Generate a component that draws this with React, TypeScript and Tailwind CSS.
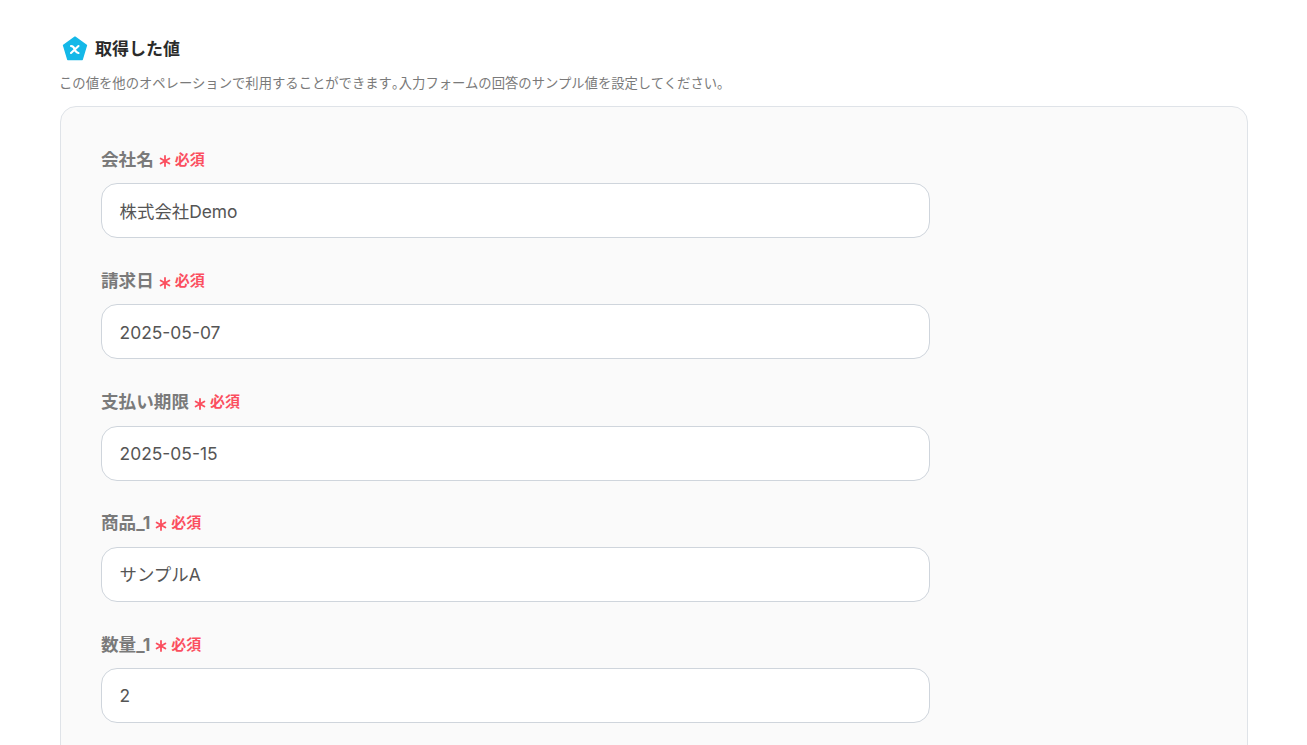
const FIELDS = [
  { label: '会社名', value: '株式会社Demo' },
  { label: '請求日', value: '2025-05-07' },
  { label: '支払い期限', value: '2025-05-15' },
  { label: '商品_1', value: 'サンプルA' },
  { label: '数量_1', value: '2' },
]

function Field({ label, value }: { label: string; value: string }) {
  return (
    <div>
      <div className="flex h-[20px] items-center">
        <span className="text-[17.6px] leading-[20px] font-bold text-[#7a7a7a]">{label}</span>
        <span className="ml-[5px] text-[#fb4f5f]">
          <svg width="12" height="12" viewBox="0 0 12 12" className="mt-[3px]" fill="none" stroke="currentColor" strokeWidth="1.8" strokeLinecap="round">
            <path d="M6 1v10M1.6 3.4l8.8 5.2M10.4 3.4L1.6 8.6" />
          </svg>
        </span>
        <span className="ml-[4px] text-[15px] leading-[20px] font-bold text-[#fb4f5f]">必須</span>
      </div>
      <div className="mt-[13.3px] flex h-[55px] w-[829px] items-center rounded-[16px] border border-[#cfd5dc] bg-white pt-[2px] pl-[17.6px] text-[17.4px] text-[#555555]">
        {value}
      </div>
    </div>
  )
}

export default function App() {
  return (
    <div className="h-[745px] overflow-hidden bg-white pt-[35px] pl-[60px] font-['Inter','Noto_Sans_CJK_JP',sans-serif]">
      <div className="flex items-center pl-[2px]">
        <svg width="26" height="26" viewBox="0 0 26 26">
          <path d="M13 1.2 24.4 9.4 20.2 23.4H5.8L1.6 9.4Z" fill="#14b8e8" stroke="#14b8e8" strokeWidth="1.5" strokeLinejoin="round" />
          <path d="M9 10c2.4.2 3 1.4 3.6 3.2s1.400 3.400 3.900 3.800M16.500 10 9 17" fill="none" stroke="white" strokeWidth="2.100" strokeLinecap="round" />
        </svg>
        <span className="ml-[7px] text-[17px] leading-[28px] font-bold text-[#2b2b2b]">取得した値</span>
      </div>
      <p className="mt-[10px] -ml-[1px] text-[13.33px] leading-[20px] text-[#7a7a7a]">
        この値を他のオペレーションで利用することができます<span className="tracking-[-6.5px]">。</span>入力フォームの回答のサンプル値を設定してください。
      </p>
      <div className="mt-[13px] h-[700px] w-[1188px] rounded-[16px] border border-[#dfe3e8] bg-[#fafafa] pt-[42.78px] pl-[40px]">
        <div className="flex flex-col gap-[32.95px]">
          {FIELDS.map((f) => (
            <Field key={f.label} label={f.label} value={f.value} />
          ))}
        </div>
      </div>
    </div>
  )
}
